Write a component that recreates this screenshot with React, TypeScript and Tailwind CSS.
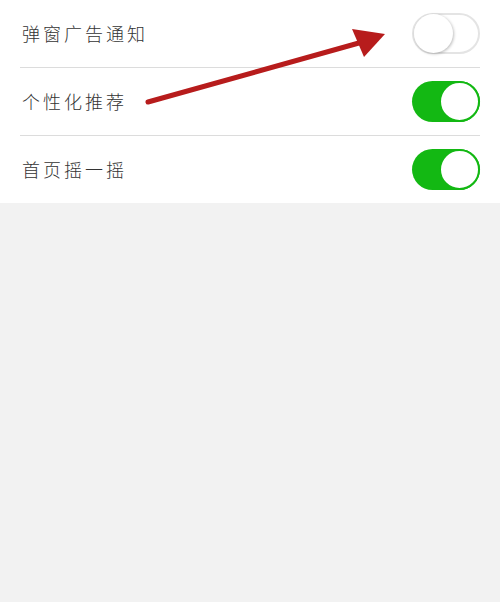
import React from 'react';

type Item = { label: string; on: boolean };

const items: Item[] = [
  { label: '弹窗广告通知', on: false },
  { label: '个性化推荐', on: true },
  { label: '首页摇一摇', on: true },
];

function Toggle({ on }: { on: boolean }) {
  if (on) {
    return (
      <div className="flex h-[41px] w-[68px] items-center justify-end rounded-full bg-[#13b813]">
        <div className="h-[41px] w-[41px] rounded-full border-2 border-[#13b813] bg-white" />
      </div>
    );
  }
  return (
    <div className="flex h-[41px] w-[68px] items-center rounded-full border-2 border-[#e4e4e4] bg-white">
      <div className="h-[39px] w-[39px] rounded-full bg-white shadow-[1px_1px_3px_rgba(0,0,0,0.25)]" />
    </div>
  );
}

export default function App() {
  return (
    <main
      className="relative h-[602px] w-full bg-[#f2f2f2]"
      style={{ fontFamily: '"Noto Sans CJK SC", "Noto Sans", sans-serif' }}
    >
      <section className="bg-white px-5">
        {items.map((it, i) => (
          <div
            key={it.label}
            className={
              i < items.length - 1
                ? 'flex h-[68px] items-center justify-between border-b border-[#dcdcdc]'
                : 'flex h-[67px] items-center justify-between'
            }
          >
            <span className="pl-[2px] text-[18px] font-light tracking-[3px] text-[#333]">{it.label}</span>
            <Toggle on={it.on} />
          </div>
        ))}
      </section>

      {/* annotation arrow */}
      <svg className="pointer-events-none absolute left-0 top-0" width="500" height="210">
        <line x1="148" y1="102" x2="366" y2="41" stroke="#b71c1c" strokeWidth="5" strokeLinecap="round" />
        <polygon points="385,34 352,29 358,43 364,57" fill="#b71c1c" />
      </svg>
    </main>
  );
}
